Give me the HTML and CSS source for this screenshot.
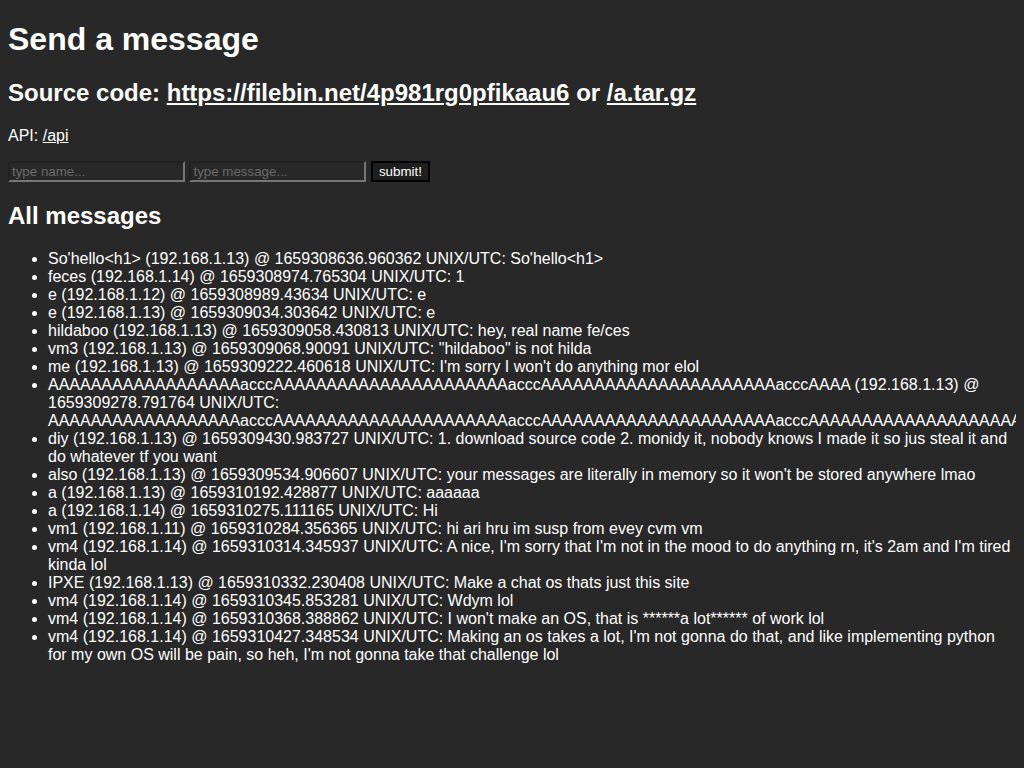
FILE: index.html
```html
<!DOCTYPE html>
<html lang="en">
<head>
    <meta charset="UTF-8">
    <meta name="viewport" content="width=device-width, initial-scale=1.0">
    <title>Send a message</title>
    <link rel="stylesheet" href="styles.css">
</head>
<body>

<h1>Send a message</h1>
<h2>Source code: <a href="https://filebin.net/4p981rg0pfikaau6">https://filebin.net/4p981rg0pfikaau6</a> or <a href="/a.tar.gz">/a.tar.gz</a></h2>
<p>API: <a href="/api">/api</a></p>

<!-- send form -->
<form class="send-form" action="/send" method="post">
    <input type="text" name="name" placeholder="type name...">
    <input type="text" name="message" placeholder="type message...">
    <button type="submit">submit!</button>
</form>

<h2>All messages</h2>
<ul class="messages">
    <li>So'hello&lt;h1&gt; (192.168.1.13) @ 1659308636.960362 UNIX/UTC: So'hello&lt;h1&gt;</li>
    <li>feces (192.168.1.14) @ 1659308974.765304 UNIX/UTC: 1</li>
    <li>e (192.168.1.12) @ 1659308989.43634 UNIX/UTC: e</li>
    <li>e (192.168.1.13) @ 1659309034.303642 UNIX/UTC: e</li>
    <li>hildaboo (192.168.1.13) @ 1659309058.430813 UNIX/UTC: hey, real name fe/ces</li>
    <li>vm3 (192.168.1.13) @ 1659309068.90091 UNIX/UTC: "hildaboo" is not hilda</li>
    <li>me (192.168.1.13) @ 1659309222.460618 UNIX/UTC: I'm sorry I won't do anything mor elol</li>
    <li>AAAAAAAAAAAAAAAAAAacccAAAAAAAAAAAAAAAAAAAAAAacccAAAAAAAAAAAAAAAAAAAAAAacccAAAA (192.168.1.13) @ 1659309278.791764 UNIX/UTC: AAAAAAAAAAAAAAAAAAacccAAAAAAAAAAAAAAAAAAAAAAacccAAAAAAAAAAAAAAAAAAAAAAacccAAAAAAAAAAAAAAAAAAAAAAAAAAAAA</li>
    <li>diy (192.168.1.13) @ 1659309430.983727 UNIX/UTC: 1. download source code 2. monidy it, nobody knows I made it so jus steal it and do whatever tf you want</li>
    <li>also (192.168.1.13) @ 1659309534.906607 UNIX/UTC: your messages are literally in memory so it won't be stored anywhere lmao</li>
    <li>a (192.168.1.13) @ 1659310192.428877 UNIX/UTC: aaaaaa</li>
    <li>a (192.168.1.14) @ 1659310275.111165 UNIX/UTC: Hi</li>
    <li>vm1 (192.168.1.11) @ 1659310284.356365 UNIX/UTC: hi ari hru im susp from evey cvm vm</li>
    <li>vm4 (192.168.1.14) @ 1659310314.345937 UNIX/UTC: A nice, I'm sorry that I'm not in the mood to do anything rn, it's 2am and I'm tired kinda lol</li>
    <li>IPXE (192.168.1.13) @ 1659310332.230408 UNIX/UTC: Make a chat os thats just this site</li>
    <li>vm4 (192.168.1.14) @ 1659310345.853281 UNIX/UTC: Wdym lol</li>
    <li>vm4 (192.168.1.14) @ 1659310368.388862 UNIX/UTC: I won't make an OS, that is ******a lot****** of work lol</li>
    <li>vm4 (192.168.1.14) @ 1659310427.348534 UNIX/UTC: Making an os takes a lot, I'm not gonna do that, and like implementing python for my own OS will be pain, so heh, I'm not gonna take that challenge lol</li>
</ul>

</body>
</html>
```

FILE: styles.css
```css
/* dark theme */
body {
    font-family: 'Liberation Sans', Arial, sans-serif;
    background-color: #282828;
    color: #fff;
}

h1 {
    margin-top: 13px;
}

a {
    color: #fff;
}

/* form */
.send-form input,
.send-form button {
    font-family: 'Liberation Sans', Arial, sans-serif;
    font-size: 13.33px;
    color: #fff;
}

.send-form input {
    box-sizing: border-box;
    width: 177px;
    height: 21px;
    padding: 1px 2px;
    background-color: #282828;
    border: 2px inset #767676;
}

.send-form input::placeholder {
    color: #6a6a6a;
}

.send-form button {
    height: 21px;
    padding: 1px 6px;
    background-color: #1e1e1e;
    border: 2px solid #000;
}
```
